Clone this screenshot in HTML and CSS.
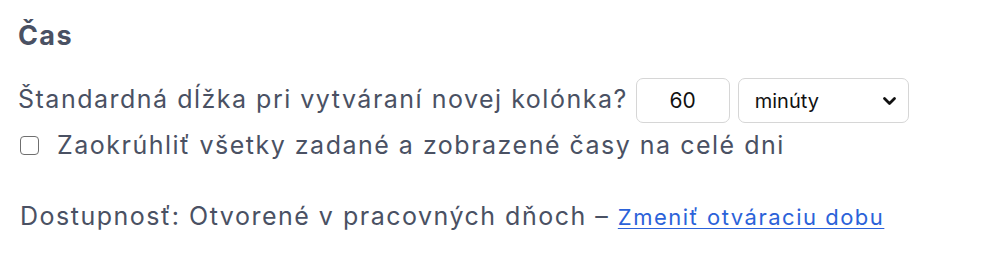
FILE: index.html
```html
<!DOCTYPE html>
<html lang="sk">
<head>
  <meta charset="UTF-8" />
  <title>Čas</title>
  <link rel="stylesheet" href="styles.css">
</head>
<body>
  <section class="settings">
    <h2>Čas</h2>

    <div class="row">
      <label for="duration">Štandardná dĺžka pri vytváraní novej kolónka?</label>
      <input id="duration" class="num" type="text" value="60">
      <div class="select">
        <span>minúty</span>
        <svg width="15" height="10" viewBox="0 0 15 10"><path d="M2.5 2.5 L7.5 7.5 L12.5 2.5" fill="none" stroke="#111" stroke-width="2.8" stroke-linecap="round" stroke-linejoin="round"/></svg>
      </div>
    </div>

    <label class="check">
      <span class="box"></span>
      Zaokrúhliť všetky zadané a zobrazené časy na celé dni
    </label>

    <p class="availability">
      Dostupnosť: Otvorené v pracovných dňoch –
      <a href="#">Zmeniť otváraciu dobu</a>
    </p>
  </section>
</body>
</html>
```

FILE: styles.css
```css
* {
  box-sizing: border-box;
  margin: 0;
  padding: 0;
}

body {
  background: #fff;
  font-family: Inter, 'Noto Sans', sans-serif;
  color: #4a5163;
}

.settings {
  padding: 20px 18px;
}

h2 {
  font-size: 27px;
  font-weight: 700;
  letter-spacing: 1.4px;
  line-height: 32px;
  margin-bottom: 26px;
}

.row {
  display: flex;
  align-items: center;
  font-size: 25px;
  letter-spacing: 1.5px;
}

.row label {
  margin-bottom: 4px;
  margin-right: 8px;
}

.num {
  width: 94px;
  height: 45px;
  border: 1px solid #d6d6d6;
  border-radius: 7px;
  font-family: Inter, sans-serif;
  font-size: 21px;
  letter-spacing: 0;
  color: #111;
  text-align: center;
  margin-right: 8px;
}

.select {
  width: 171px;
  height: 45px;
  border: 1px solid #d6d6d6;
  border-radius: 7px;
  display: flex;
  align-items: center;
  justify-content: space-between;
  padding: 0 11px 0 16px;
  font-size: 20px;
  letter-spacing: 0;
  color: #111;
}

.check {
  display: flex;
  align-items: center;
  gap: 18px;
  font-size: 25px;
  letter-spacing: 1.5px;
  line-height: 30px;
  margin-top: 7px;
  padding-left: 2px;
}

.box {
  width: 19px;
  height: 19px;
  border: 1.5px solid #6f6f6f;
  border-radius: 4px;
  flex-shrink: 0;
}

.availability {
  margin-top: 41px;
  font-size: 25px;
  letter-spacing: 1.5px;
  line-height: 30px;
  padding-left: 2px;
}

.availability a {
  font-size: 22px;
  color: #2b62d9;
  text-decoration: underline;
  text-decoration-thickness: 1px;
  text-underline-offset: 3px;
}
```
